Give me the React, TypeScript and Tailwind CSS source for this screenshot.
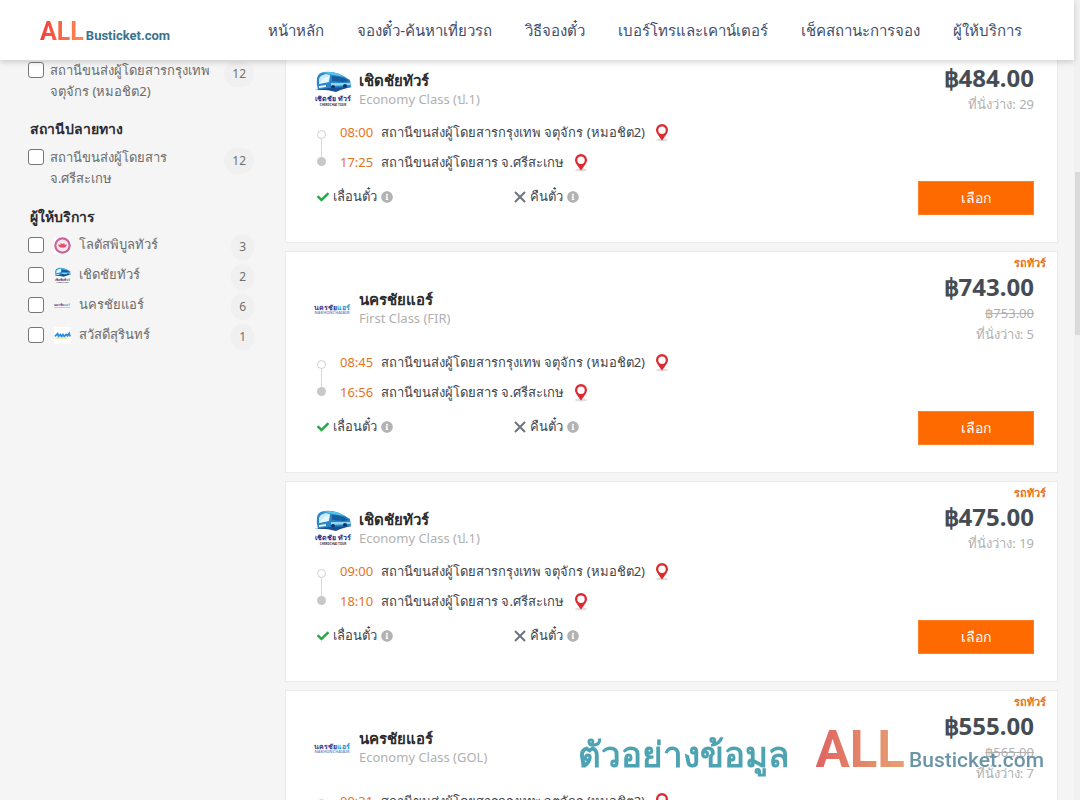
import React from 'react';
import { FaCheck, FaInfoCircle } from 'react-icons/fa';

type Operator = 'cherdchai' | 'nakhonchai' | 'lotus' | 'sawasdee';

interface Trip {
  operator: Operator;
  name: string;
  seatClass: string;
  price: string;
  fullPrice?: string;
  seats: number;
  departs: string;
  arrives: string;
}

const navItems = [
  'หน้าหลัก',
  'จองตั๋ว-ค้นหาเที่ยวรถ',
  'วิธีจองตั๋ว',
  'เบอร์โทรและเคาน์เตอร์',
  'เช็คสถานะการจอง',
  'ผู้ให้บริการ',
];

const operators: { operator: Operator; name: string; count: number }[] = [
  { operator: 'lotus', name: 'โลตัสพิบูลทัวร์', count: 3 },
  { operator: 'cherdchai', name: 'เชิดชัยทัวร์', count: 2 },
  { operator: 'nakhonchai', name: 'นครชัยแอร์', count: 6 },
  { operator: 'sawasdee', name: 'สวัสดีสุรินทร์', count: 1 },
];

const trips: Trip[] = [
  { operator: 'cherdchai', name: 'เชิดชัยทัวร์', seatClass: 'Economy Class (ป.1)', price: '฿484.00', seats: 29, departs: '08:00', arrives: '17:25' },
  { operator: 'nakhonchai', name: 'นครชัยแอร์', seatClass: 'First Class (FIR)', price: '฿743.00', fullPrice: '฿753.00', seats: 5, departs: '08:45', arrives: '16:56' },
  { operator: 'cherdchai', name: 'เชิดชัยทัวร์', seatClass: 'Economy Class (ป.1)', price: '฿475.00', seats: 19, departs: '09:00', arrives: '18:10' },
  { operator: 'nakhonchai', name: 'นครชัยแอร์', seatClass: 'Economy Class (GOL)', price: '฿555.00', fullPrice: '฿565.00', seats: 7, departs: '09:31', arrives: '17:40' },
];

const OperatorLogo: React.FC<{ operator: Operator; className: string }> = ({ operator, className }) => {
  if (operator === 'cherdchai') {
    return (
      <svg viewBox="0 0 38 38" className={className} aria-hidden="true">
        <path d="M3 8Q4 3 10 2Q22 0 36 10L37 17L24 19L4 20Q2 14 3 8Z" fill="#2a86c8" />
        <path d="M8 3Q19 0 31 7L19 5Q12 3 8 3Z" fill="#59c3e8" />
        <path d="M5 9Q6 5 12 4L16 5L15 12L5 14Z" fill="#c5ebf8" />
        <path d="M5 14L14 12L16 5L9 9Z" fill="#fff" opacity="0.6" />
        <path d="M18 6Q28 6 35 11L30 12L18 11Z" fill="#175c9c" />
        <path d="M17 13L36 13L36 15L17 16Z" fill="#8ed7ef" />
        <circle cx="19" cy="17" r="2" fill="#0d3566" />
        <circle cx="31" cy="16" r="2" fill="#0d3566" />
        <path d="M5 16L12 15L12 17L5 18Z" fill="#e3f6fc" />
        <path d="M0 20Q18 17 38 17Q28 19 22 22Q12 19 0 20Z" fill="#174f92" />
        <text x="19" y="31" textAnchor="middle" fontSize="7" fontWeight="700" fill="#2d2f87">เชิดชัย ทัวร์</text>
        <text x="19" y="36" textAnchor="middle" fontSize="3" fontWeight="700" fill="#33333f">CHERDCHAI TOUR</text>
      </svg>
    );
  }
  if (operator === 'nakhonchai') {
    return (
      <svg viewBox="0 0 38 38" className={className} aria-hidden="true">
        <text x="18" y="21" textAnchor="middle" fontSize="7" fontWeight="700" fill="#3d3a87">
          นครชัย<tspan fill="#2b93d1">แอร์</tspan>
        </text>
        <text x="18" y="25" textAnchor="middle" fontSize="4" fontWeight="700" fill="#8a90bd">NAKHONCHAIAIR</text>
      </svg>
    );
  }
  if (operator === 'lotus') {
    return (
      <svg viewBox="0 0 38 38" className={className} aria-hidden="true">
        <rect width="38" height="38" fill="#fff" />
        <circle cx="19" cy="19" r="16" fill="#fdeaf0" stroke="#c9659a" strokeWidth="5" />
        <path d="M9 16L14 18L15 13L19 16L23 13L24 18L29 16Q28 24 19 24Q10 24 9 16Z" fill="#e4506c" />
      </svg>
    );
  }
  return (
    <svg viewBox="0 0 38 38" className={className} aria-hidden="true">
      <rect width="38" height="38" fill="#fff" />
      <path d="M2 21L8 15L10 21L14 17L17 21L20 17L23 21L27 17L30 20L34 14L36 21" fill="none" stroke="#2b8fe0" strokeWidth="4" />
      <path d="M3 25H30" stroke="#e3d97a" strokeWidth="2" />
    </svg>
  );
};

const MapPin: React.FC = () => (
  <svg viewBox="0 0 14 18" className="h-[18px] w-[14px]" aria-hidden="true">
    <ellipse cx="7" cy="16" rx="6" ry="1.5" fill="#dedede" />
    <path fillRule="evenodd" d="M7 0A6 6 0 0 0 1 6C1 9 4 12 7 16.5C10 12 13 9 13 6A6 6 0 0 0 7 0ZM7 2.5A3.7 3.7 0 1 1 7 9.9A3.7 3.7 0 1 1 7 2.5Z" fill="#dc2a30" />
  </svg>
);

const CrossIcon: React.FC = () => (
  <svg viewBox="0 0 12 12" className="size-3" fill="none" stroke="#6c757d" strokeWidth="2" aria-hidden="true">
    <path d="M1 1L11 11M11 1L1 11" />
  </svg>
);

const CountBadge: React.FC<{ count: number }> = ({ count }) => (
  <span className="mt-1 flex h-[26px] min-w-[22px] shrink-0 items-center justify-center rounded-full bg-[#f0f0f0] px-2 text-xs text-[#707070]">
    {count}
  </span>
);

const checkboxClass =
  'size-4 shrink-0 appearance-none rounded-[3px] border border-[#767676] bg-white checked:bg-[#ff6a00]';

const StationFilter: React.FC<{ id: string; lines: string[]; count: number }> = ({ id, lines, count }) => (
  <div className="flex items-start gap-1.5">
    <input id={id} type="checkbox" className={`${checkboxClass} mt-0.5`} />
    <label htmlFor={id} className="flex-1 leading-[21px] whitespace-nowrap text-[#6c6c6c]">
      {lines.map((line) => (
        <span key={line} className="block">{line}</span>
      ))}
    </label>
    <div className="-mt-1 flex pt-px">
      <CountBadge count={count} />
    </div>
  </div>
);

const Sidebar: React.FC = () => (
  <aside className="w-[254px] shrink-0 pl-7 text-[13px]">
    <StationFilter id="from-mochit" lines={['สถานีขนส่งผู้โดยสารกรุงเทพ', 'จตุจักร (หมอชิต2)']} count={12} />
    <h2 className="mt-[17px] mb-2 pl-0.5 text-sm leading-5 font-bold text-[#2b2b33]">สถานีปลายทาง</h2>
    <StationFilter id="to-sisaket" lines={['สถานีขนส่งผู้โดยสาร', 'จ.ศรีสะเกษ']} count={12} />
    <h2 className="mt-[18px] mb-[3px] pl-0.5 text-sm leading-5 font-bold text-[#2b2b33]">ผู้ให้บริการ</h2>
    {operators.map((item) => (
      <div key={item.operator} className="flex h-[30px] items-center">
        <input id={item.operator} type="checkbox" className={checkboxClass} />
        <label htmlFor={item.operator} className="flex flex-1 items-center gap-2 pl-2.5 text-[#6c6c6c]">
          <OperatorLogo operator={item.operator} className="size-[17px]" />
          {item.name}
        </label>
        <CountBadge count={item.count} />
      </div>
    ))}
  </aside>
);

const Stop: React.FC<{ time: string; station: string }> = ({ time, station }) => (
  <div className="flex h-[30px] items-center">
    <span className="w-[41px] text-[#e8731e]">{time}</span>
    <span className="mr-2.5 text-[#3f464d]">{station}</span>
    <MapPin />
  </div>
);

const TripCard: React.FC<{ trip: Trip }> = ({ trip }) => (
  <article className="relative border border-[#ebebeb] bg-white pt-[19px] pr-[23px] pb-[27px] pl-7 text-[13px]">
    <span className="absolute top-1 right-[11px] text-[11px] leading-[14px] font-bold text-[#e8731e]">รถทัวร์</span>
    <div className="flex items-center">
      <OperatorLogo operator={trip.operator} className="size-[38px]" />
      <div className="flex-1 pl-[7px]">
        <h3 className="text-[15px] leading-5 font-bold text-[#2b2b2b]">{trip.name}</h3>
        <p className="leading-[18px] text-[#b0b0b0]">{trip.seatClass}</p>
      </div>
      <div className="text-right leading-[21px] text-[#b0b0b0]">
        <p className="text-2xl leading-8 font-bold text-[#454c53]">{trip.price}</p>
        {trip.fullPrice && <p className="line-through">{trip.fullPrice}</p>}
        <p>ที่นั่งว่าง: {trip.seats}</p>
      </div>
    </div>
    <div className="mt-[3px] flex items-end justify-between">
      <div>
        <div className="flex">
          <div className="flex w-[26px] flex-col items-center py-3 pr-3">
            <span className="size-[9px] shrink-0 rounded-full border border-[#d0d0d0]" />
            <span className="w-px flex-1 bg-[#d8d8d8]" />
            <span className="size-[9px] shrink-0 rounded-full bg-[#c8c8c8]" />
          </div>
          <div>
            <Stop time={trip.departs} station="สถานีขนส่งผู้โดยสารกรุงเทพ จตุจักร (หมอชิต2)" />
            <Stop time={trip.arrives} station="สถานีขนส่งผู้โดยสาร จ.ศรีสะเกษ" />
          </div>
        </div>
        <div className="flex h-[37px] items-center text-[#3f464d]">
          <span className="flex w-[198px] items-center gap-1 pl-[3px]">
            <FaCheck className="size-3 text-[#28a745]" />
            เลื่อนตั๋ว
            <FaInfoCircle className="size-3 text-[#b3b3b3]" />
          </span>
          <span className="flex items-center gap-1 pl-0.5">
            <CrossIcon />
            คืนตั๋ว
            <FaInfoCircle className="size-3 text-[#b3b3b3]" />
          </span>
        </div>
      </div>
      <button type="button" className="h-[34px] w-[116px] border border-[#ff7f27] bg-[#ff6a00] text-sm text-white">
        เลือก
      </button>
    </div>
  </article>
);

const App: React.FC = () => {
  return (
    <div className="relative flex h-screen overflow-hidden bg-[#f5f5f5] font-['Noto_Sans',sans-serif]">
      <div className="flex min-w-0 flex-1 flex-col">
        <header className="z-10 flex h-[60px] shrink-0 items-center justify-between bg-white pr-[52px] pl-10 shadow-[0_2px_6px_rgba(0,0,0,0.18)]">
          <a href="#" className="flex items-baseline pt-[3px] font-[Roboto,sans-serif] font-bold">
            <span className="bg-linear-to-r from-[#f23c3c] to-[#ff8a50] bg-clip-text text-[25px] text-transparent">ALL</span>
            <span className="pl-0.5 text-[13px] text-[#3a7390]">Busticket.com</span>
          </a>
          <nav className="flex gap-[33px] text-[15px] whitespace-nowrap text-[#3f4d6b]">
            {navItems.map((item) => (
              <a key={item} href="#">{item}</a>
            ))}
          </nav>
        </header>
        <div className="flex min-h-0 flex-1 items-start">
          <Sidebar />
          <main className="-mt-[18px] mr-4 ml-[31px] flex min-w-0 flex-1 flex-col gap-2">
            {trips.map((trip) => (
              <TripCard key={trip.departs} trip={trip} />
            ))}
          </main>
        </div>
      </div>
      <div className="w-1.5 shrink-0 bg-[#f1f1f1] pt-[172px]">
        <div className="ml-px h-[163px] bg-[#dadada]" />
      </div>
      {/* sample-data watermark */}
      <div className="pointer-events-none absolute right-9 bottom-[18px] flex items-baseline whitespace-nowrap opacity-80">
        <span className="mr-[27px] text-[35px] leading-[56px] font-bold text-[#238da1]">ตัวอย่างข้อมูล</span>
        <span className="bg-linear-to-r from-[#d83c3a] to-[#df8a50] bg-clip-text font-[Roboto,sans-serif] text-[51px] leading-[56px] font-bold text-transparent">ALL</span>
        <span className="pl-1 font-[Roboto,sans-serif] text-[21px] font-medium text-[#467b92]">Busticket.com</span>
      </div>
    </div>
  );
};

export default App;
